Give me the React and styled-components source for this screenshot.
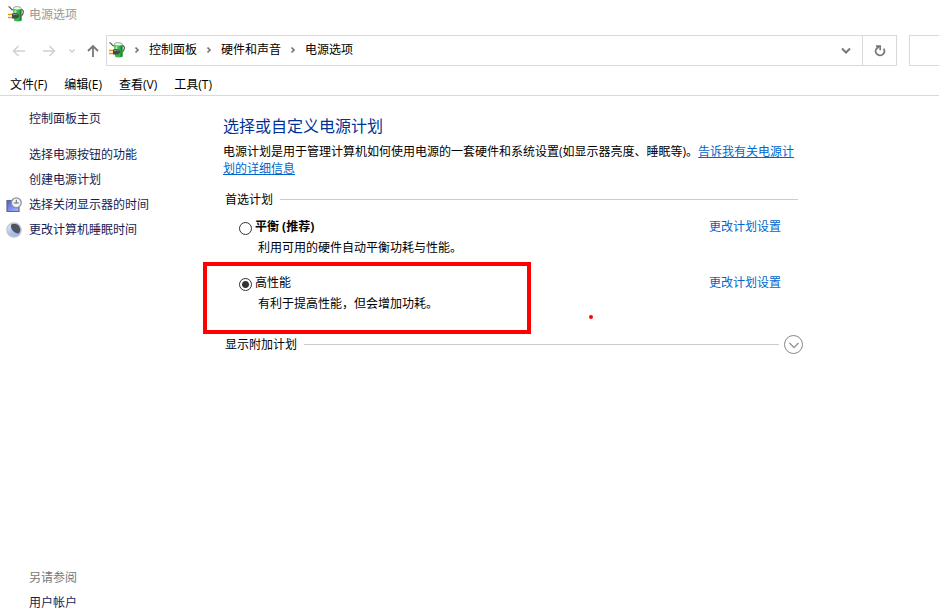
import React, { useState } from 'react'
import styled, { createGlobalStyle } from 'styled-components'

const menus = ['文件(F)', '编辑(E)', '查看(V)', '工具(T)']
const crumbs = ['控制面板', '硬件和声音', '电源选项']
const plans = [
  { id: 'balanced', name: '平衡 (推荐)', text: '利用可用的硬件自动平衡功耗与性能。', bold: true },
  { id: 'high', name: '高性能', text: '有利于提高性能，但会增加功耗。', marked: true },
]

function PowerIcon() {
  return (
    <svg width="16" height="16" viewBox="0 0 16 16" aria-hidden="true">
      <path d="M.5.6C2.500.6 2.500 3.600 5 4" fill="none" stroke="#555" strokeWidth="1.200" />
      <path d="M13 3.500c3 0 3 4 .5 6.500" fill="none" stroke="#555" strokeWidth="1.200" />
      <path d="M5 2.500h8.500V14.500c-2 1.300-5.500 1.300-7.500 0Z" fill="#35b84a" />
      <path d="M11.500 3.500h2v11l-2 .8Z" fill="#1d8534" />
      <path d="M6.500 4h2v4h-2Z" fill="#a5efa0" />
      <ellipse cx="9.200" cy="2.300" rx="4" ry="1.700" fill="#eefbea" stroke="#5c8f5e" strokeWidth="0.700" />
      <path d="M0 8.500h4.500M0 11.500h4.500" stroke="#d99a15" strokeWidth="1.500" />
      <path d="M4 7.500 7.500 7c2.500.2 3.500 1.400 3.500 2.800s-1.200 2.800-3.500 2.800H4Z" fill="#484848" />
      <path d="M5 8.700 7.500 8.300c1 0 1.600.3 2 .8" fill="none" stroke="#999" strokeWidth="0.900" />
    </svg>
  )
}

function DisplayIcon() {
  return (
    <svg width="16" height="16" viewBox="0 0 16 16" aria-hidden="true">
      <defs>
        <linearGradient id="screen" x1="0" y1="0" x2="1" y2="1">
          <stop offset="0" stopColor="#4a60d8" />
          <stop offset="1" stopColor="#a9b8fa" />
        </linearGradient>
      </defs>
      <path d="M1 3.500h12v11H1Z" fill="url(#screen)" stroke="#62667e" strokeWidth="1.200" />
      <circle cx="10.300" cy="5.700" r="4.900" fill="#f2f5f6" stroke="#8d9298" strokeWidth="1.300" />
      <path d="M10.300 2.800v3.200h2.500M7.800 6h2.500" fill="none" stroke="#5c6c7b" strokeWidth="1" />
    </svg>
  )
}

function SleepIcon() {
  return (
    <svg width="16" height="16" viewBox="0 0 16 16" aria-hidden="true">
      <defs>
        <linearGradient id="moon" x1="0" y1="0" x2="1" y2="1">
          <stop offset="0" stopColor="#f1f5fa" />
          <stop offset="0.500" stopColor="#a8c2ea" />
          <stop offset="1" stopColor="#8fb0e6" />
        </linearGradient>
      </defs>
      <circle cx="8" cy="8" r="7.200" fill="url(#moon)" stroke="#bfc4ca" strokeWidth="1.200" />
      <path d="M5 2.800C8 .8 12 1.800 13.500 5s.5 5-1 6.500C8.500 11.500 4.500 8 5 2.800Z" fill="#505362" />
    </svg>
  )
}

function Arrow({ d, size = 14, width = 1.5 }) {
  return (
    <svg width={size} height={size} viewBox="0 0 14 14" fill="none" stroke="currentColor" strokeWidth={width} aria-hidden="true">
      <path d={d} />
    </svg>
  )
}

function App() {
  const [plan, setPlan] = useState('high')

  return (
    <Window lang="zh-CN">
      <GlobalStyle />
      <TitleBar>
        <PowerIcon />
        电源选项
      </TitleBar>

      <NavBar>
        <NavButton $width={30} aria-label="后退" disabled><Arrow d="M13 7H1.500M6.500 2 1.500 7l5 5" /></NavButton>
        <NavButton $width={30} aria-label="前进" disabled><Arrow d="M1 7h11.500M7.500 2l5 5-5 5" /></NavButton>
        <NavButton $width={16} aria-label="最近" disabled><Arrow d="M4.500 5.500l2.500 2.500 2.500-2.500" /></NavButton>
        <NavButton $width={26} aria-label="向上"><Arrow d="M7 13V2M2 7l5-5 5 5" width={1.8} /></NavButton>
        <Address>
          <PowerIcon />
          <Crumbs>
            {crumbs.map((name) => (
              <Crumb key={name}>
                <Separator><Arrow d="M5.500 4.500l2.500 2.500-2.500 2.500" width={1.7} /></Separator>
                <a href="#path">{name}</a>
              </Crumb>
            ))}
          </Crumbs>
          <NavButton $width={32} aria-label="展开地址"><Arrow d="M3 5.500l4 4 4-4" width={2} /></NavButton>
        </Address>
        <Refresh aria-label="刷新">
          <svg width="14" height="14" viewBox="0 0 14 14" fill="none" stroke="currentColor" strokeWidth="1.700" aria-hidden="true">
            <path d="M10.600 4.600A4.300 4.300 0 1 1 3.600 4.400L6 3" />
            <path d="M3 2.200h4.200v4" />
          </svg>
        </Refresh>
        <Search type="text" aria-label="搜索" />
      </NavBar>

      <MenuBar>
        {menus.map((name) => <MenuButton key={name}>{name}</MenuButton>)}
      </MenuBar>

      <Body>
        <Sidebar>
          <SideLink href="#home">控制面板主页</SideLink>
          <Tasks>
            <SideLink href="#buttons">选择电源按钮的功能</SideLink>
            <SideLink href="#create">创建电源计划</SideLink>
            <SideLink href="#display"><IconSlot><DisplayIcon /></IconSlot>选择关闭显示器的时间</SideLink>
            <SideLink href="#sleep"><IconSlot><SleepIcon /></IconSlot>更改计算机睡眠时间</SideLink>
          </Tasks>
          <SeeAlso>另请参阅</SeeAlso>
          <SideLink href="#users">用户帐户</SideLink>
        </Sidebar>

        <Main>
          <Heading>选择或自定义电源计划</Heading>
          <Intro>
            电源计划是用于管理计算机如何使用电源的一套硬件和系统设置(如显示器亮度、睡眠等)。<a href="#more">告诉我有关电源计划的详细信息</a>
          </Intro>
          <SectionTitle>首选计划</SectionTitle>
          <Plans>
            {plans.map((p) => (
              <Plan key={p.id}>
                <Radio
                  type="radio"
                  name="plan"
                  id={p.id}
                  aria-describedby={p.id + '-text'}
                  checked={plan === p.id}
                  onChange={() => setPlan(p.id)}
                />
                <PlanName htmlFor={p.id} $bold={p.bold}>{p.name}</PlanName>
                <PlanLink href="#settings">更改计划设置</PlanLink>
                <PlanText id={p.id + '-text'}>{p.text}</PlanText>
                {p.marked && <Highlight />}
                {p.marked && <RedDot />}
              </Plan>
            ))}
          </Plans>
          <MoreRow>
            <MoreTitle>显示附加计划</MoreTitle>
            <Expand aria-label="显示附加计划"><Arrow d="M2.500 5l4.500 4.500L11.500 5" /></Expand>
          </MoreRow>
        </Main>
      </Body>
    </Window>
  )
}

export default App

const GlobalStyle = createGlobalStyle`
  * {
    box-sizing: border-box;
  }
  body {
    margin: 0;
    background: #fff;
  }
  body, button, input {
    font-family: 'Open Sans', 'Noto Sans CJK SC', sans-serif;
    font-size: 12px;
    line-height: 17px;
    color: #000;
  }
  button {
    padding: 0;
    border: none;
    background: none;
  }
  a {
    color: inherit;
    text-decoration: none;
  }
  svg {
    display: block;
    flex: none;
  }
`

const Window = styled.div`
  display: flex;
  flex-direction: column;
  min-height: 100vh;
`

const TitleBar = styled.header`
  display: flex;
  align-items: center;
  gap: 5px;
  height: 28px;
  padding-left: 8px;
  color: #999;
`

const NavBar = styled.nav`
  display: flex;
  padding: 7px 0 0 4px;
  height: 38px;
`

const NavButton = styled.button`
  display: flex;
  flex: none;
  align-items: center;
  justify-content: center;
  width: ${(props) => props.$width}px;
  color: #777;

  &:disabled {
    color: #d0d0d0;
  }
`

const Address = styled.div`
  display: flex;
  flex: 1;
  align-items: center;
  padding: 0 0 2px 2px;
  border: 1px solid #d9d9d9;
`

const Crumbs = styled.ol`
  display: flex;
  flex: 1;
  margin: 0;
  padding: 0;
  list-style: none;
`

const Crumb = styled.li`
  display: flex;
  align-items: center;
`

const Separator = styled.span`
  display: flex;
  justify-content: center;
  width: 24px;
  color: #777;
`

const Refresh = styled.button`
  display: flex;
  align-items: center;
  justify-content: center;
  width: 34px;
  border: 1px solid #d9d9d9;
  border-left: none;
  color: #777;
`

const Search = styled.input`
  width: 30px;
  margin-left: 12px;
  padding: 0;
  border: 1px solid #d9d9d9;
  border-right: none;
  border-radius: 0;
`

const MenuBar = styled.div`
  display: flex;
  gap: 17px;
  height: 30px;
  padding: 8px 10px 0;
  border-bottom: 1px solid #d9d9d9;
`

const MenuButton = styled.button`
  height: 20px;
`

const Body = styled.div`
  display: flex;
  flex: 1;
`

const Sidebar = styled.aside`
  display: flex;
  flex: none;
  flex-direction: column;
  width: 203px;
  padding-top: 10px;
`

const Tasks = styled.div`
  display: flex;
  flex: 1;
  flex-direction: column;
  padding-top: 11px;
`

const SideLink = styled.a`
  position: relative;
  display: flex;
  align-items: center;
  height: 25px;
  padding-left: 29px;
  color: #151c55;
`

const IconSlot = styled.span`
  position: absolute;
  left: 6px;
`

const SeeAlso = styled.div`
  padding: 4px 0 4px 29px;
  color: #777;
`

const Main = styled.main`
  flex: 1;
  max-width: 620px;
  padding: 19px 20px 0;
`

const Heading = styled.h1`
  margin: 0;
  font-size: 16px;
  font-weight: 400;
  line-height: 22px;
  color: #003399;
`

const Intro = styled.p`
  max-width: 575px;
  margin: 6px 0 0;

  a {
    color: #0066cc;
    text-decoration: underline;
  }
`

const SectionTitle = styled.h2`
  display: flex;
  align-items: center;
  gap: 7px;
  max-width: 575px;
  margin: 14px 0 0;
  padding-left: 2px;
  font-size: 12px;
  font-weight: 400;

  &::after {
    content: '';
    flex: 1;
    height: 1px;
    background: #ccc;
  }
`

const Plans = styled.div`
  display: flex;
  flex-direction: column;
  gap: 18px;
  max-width: 575px;
  padding: 10px 17px 0 16px;
`

const Plan = styled.div`
  position: relative;
  display: grid;
  grid-template-columns: 13px 1fr auto;
  column-gap: 3px;
  row-gap: 4px;
`

const Radio = styled.input`
  appearance: none;
  width: 13px;
  height: 13px;
  margin: 4px 0 0;
  border: 1px solid #333;
  border-radius: 50%;
  background: #fff;

  &:checked {
    background: radial-gradient(circle, #333 3px, #fff 4px);
  }
`

const PlanName = styled.label`
  justify-self: start;
  font-weight: ${(props) => (props.$bold ? 700 : 400)};
`

const PlanLink = styled.a`
  color: #0066cc;
`

const PlanText = styled.div`
  grid-column: 2 / 4;
  padding-left: 3px;
`

/* hand-drawn marks over the chosen plan */
const Highlight = styled.div`
  position: absolute;
  top: -12px;
  left: -36px;
  width: 328px;
  height: 72px;
  border: 4px solid #ff0000;
  pointer-events: none;
`

const RedDot = styled.div`
  position: absolute;
  top: 41px;
  left: 350px;
  width: 4px;
  height: 4px;
  border-radius: 50%;
  background: #ff0000;
`

const MoreRow = styled.div`
  display: flex;
  align-items: center;
  gap: 5px;
  padding-top: 23px;
`

const MoreTitle = styled(SectionTitle)`
  flex: 1;
  margin: 0;
`

const Expand = styled.button`
  display: flex;
  align-items: center;
  justify-content: center;
  width: 19px;
  height: 19px;
  border: 1px solid #888;
  border-radius: 50%;
  color: #999;
`
